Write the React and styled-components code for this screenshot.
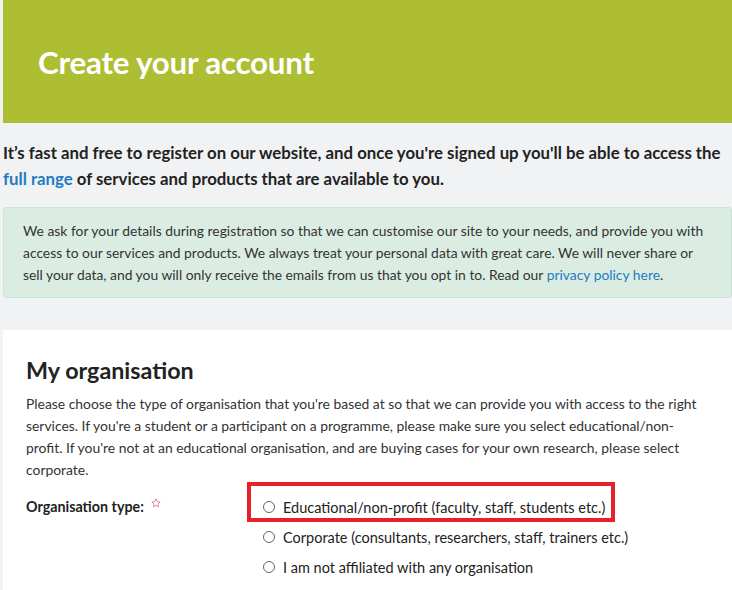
import React from "react";
import styled, { createGlobalStyle } from "styled-components";

const Global = createGlobalStyle`
  html, body { margin: 0; padding: 0; background: #f1f2f4; }
  body { font-family: Lato, "Liberation Sans", sans-serif; color: #2b2b2b; }
  * { box-sizing: border-box; }
`;

const Page = styled.div`
  padding-left: 3px;
  width: 732px;
`;

const Header = styled.header`
  height: 123px;
  background: #adbe32;
  display: flex;
  align-items: center;
  padding: 0 0 0 35px;
`;

const Title = styled.h1`
  margin: 0;
  color: #fff;
  font-size: 31.3px;
  font-weight: 700;
  letter-spacing: -0.2px;
`;

const Intro = styled.p`
  margin: 17px 0 0;
  font-size: 16.8px;
  font-weight: 700;
  line-height: 26px;
  color: #222;
`;

const Link = styled.a`
  color: #1f7bc0;
  text-decoration: none;
`;

const Notice = styled.div`
  margin-top: 15px;
  background: #dbede3;
  border: 1px solid #c8e4d4;
  border-radius: 3px;
  padding: 12px 22px 11px 19px;
  font-size: 13.86px;
  line-height: 22px;
  color: #333;
`;

const Section = styled.section`
  margin-top: 32px;
  background: #fff;
  padding: 24px 27px 20px 23px;
  min-height: 260px;
`;

const Heading = styled.h2`
  margin: 0 0 7px;
  font-size: 23.3px;
  font-weight: 700;
  line-height: 32px;
  color: #222;
`;

const Para = styled.p`
  margin: 0;
  font-size: 13.9px;
  line-height: 22px;
  color: #333;
`;

const FieldRow = styled.div`
  display: grid;
  grid-template-columns: 221px 1fr;
  margin-top: 17px;
`;

const Label = styled.div`
  font-size: 14.3px;
  font-weight: 700;
  line-height: 30px;
  color: #222;
  display: flex;
  align-items: flex-start;
  gap: 7px;
  margin-top: -6px;
`;

const Star = styled.svg`
  margin-top: 6px;
`;

const Options = styled.div`
  display: flex;
  flex-direction: column;
  margin-top: -6px;
`;

const Option = styled.label`
  position: relative;
  display: flex;
  align-items: center;
  gap: 8px;
  height: 30px;
  padding-left: 16px;
  font-size: 14.5px;
  color: #222;
`;

const Radio = styled.span`
  width: 12px;
  height: 12px;
  border-radius: 50%;
  border: 1px solid #666;
  background: #fff;
  flex: none;
`;

const Highlight = styled.span`
  position: absolute;
  left: 0;
  top: -10px;
  width: 368px;
  height: 40px;
  border: 4px solid #e8202a;
  pointer-events: none;
`;

const options = [
  "Educational/non-profit (faculty, staff, students etc.)",
  "Corporate (consultants, researchers, staff, trainers etc.)",
  "I am not affiliated with any organisation",
];

export default function App() {
  return (
    <Page>
      <Global />
      <Header>
        <Title>Create your account</Title>
      </Header>
      <Intro>
        It’s fast and free to register on our website, and once you're signed up you'll be able to access the{" "}
        <Link href="#">full range</Link> of services and products that are available to you.
      </Intro>
      <Notice>
        We ask for your details during registration so that we can customise our site to your needs, and provide you with
        access to our services and products. We always treat your personal data with great care. We will never share or
        sell your data, and you will only receive the emails from us that you opt in to. Read our{" "}
        <Link href="#">privacy policy here</Link>.
      </Notice>
      <Section>
        <Heading>My organisation</Heading>
        <Para>
          Please choose the type of organisation that you're based at so that we can provide you with access to the right
          services. If you're a student or a participant on a programme, please make sure you select educational/non-profit.
          If you're not at an educational organisation, and are buying cases for your own research, please select corporate.
        </Para>
        <FieldRow>
          <Label>
            Organisation type:
            <Star width="10" height="10" viewBox="0 0 24 24">
              <path
                d="M12 2l2.9 6.9 7.1.6-5.4 4.7 1.7 7.1L12 17.5 5.7 21.3l1.7-7.1L2 9.5l7.1-.6z"
                fill="none"
                stroke="#d9789a"
                strokeWidth="2"
                strokeLinejoin="round"
              />
            </Star>
          </Label>
          <Options>
            {options.map((o, i) => (
              <Option key={o}>
                {i === 0 && <Highlight />}
                <Radio />
                {o}
              </Option>
            ))}
          </Options>
        </FieldRow>
      </Section>
    </Page>
  );
}
